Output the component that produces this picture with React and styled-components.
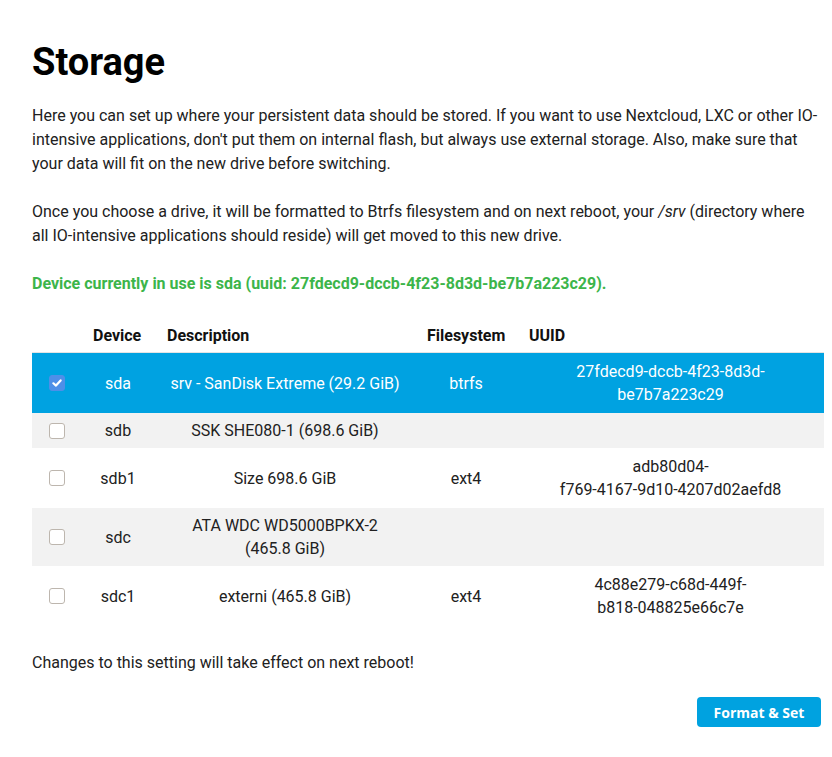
import React from 'react';
import styled, { createGlobalStyle } from 'styled-components';

const GlobalStyle = createGlobalStyle`
  body {
    margin: 0;
    background: #fff;
    font-family: Roboto, "Liberation Sans", sans-serif;
    color: #212121;
  }
`;

const Page = styled.div`
  padding: 38px 8px 30px 32px;
`;

const Title = styled.h1`
  font-size: 38px;
  line-height: 48px;
  font-weight: 700;
  margin: 0 0 18px;
  color: #000;
`;

const Text = styled.p`
  font-size: 16px;
  line-height: 24px;
  margin: 0 0 24px;
`;

const InUse = styled.p`
  font-size: 16px;
  line-height: 24px;
  font-weight: 700;
  color: #3cb54a;
  margin: 0 0 22px;
`;

const Table = styled.table`
  width: 792px;
  border-collapse: collapse;
  table-layout: fixed;
  font-size: 16px;
  line-height: 23px;
`;

const Th = styled.th`
  text-align: left;
  font-weight: 700;
  padding: 6px 12px 5px;
  border-bottom: 1px solid #e4e4e4;
  color: #111;
`;

const Row = styled.tr`
  background: ${p => (p.$selected ? '#00a2e1' : p.$odd ? '#f2f2f2' : '#fff')};
  color: ${p => (p.$selected ? '#fff' : '#212121')};
`;

const Td = styled.td`
  text-align: center;
  padding: ${p => (p.$wide ? '7px 12px' : '6px 12px')};
  padding-left: ${p => (p.$tight ? '15px' : '12px')};
  padding-right: ${p => (p.$tight ? '15px' : '12px')};
  vertical-align: middle;
`;

const Seg = styled.span`
  white-space: nowrap;
`;

const CheckCell = styled.td`
  padding: 6px 0 6px 17px;
  vertical-align: middle;
`;

const Box = styled.span`
  display: block;
  width: 16px;
  height: 16px;
  box-sizing: border-box;
  border-radius: 3px;
  border: 1px solid ${p => (p.$checked ? '#4e8fe8' : '#bdb6ae')};
  background: ${p => (p.$checked ? '#4e8fe8' : '#fff')};
  position: relative;
  svg { position: absolute; left: 2px; top: 2px; }
`;

const Note = styled.p`
  font-size: 16px;
  line-height: 24px;
  margin: 25px 0 22px;
`;

const Actions = styled.div`
  display: flex;
  justify-content: flex-end;
  padding-right: 3px;
`;

const Button = styled.button`
  background: #00a2e0;
  color: #fff;
  border: none;
  border-radius: 4px;
  font-family: "Open Sans", "Noto Sans", sans-serif;
  font-weight: 700;
  font-size: 14px;
  height: 30px;
  width: 124px;
  padding: 0;
`;

const rows = [
  { dev: 'sda', desc: 'srv - SanDisk Extreme (29.2 GiB)', fs: 'btrfs', uuid: '27fdecd9-dccb-4f23-8d3d-be7b7a223c29', selected: true },
  { dev: 'sdb', desc: 'SSK SHE080-1 (698.6 GiB)', fs: '', uuid: '' },
  { dev: 'sdb1', desc: 'Size 698.6 GiB', fs: 'ext4', uuid: 'adb80d04-f769-4167-9d10-4207d02aefd8' },
  { dev: 'sdc', desc: 'ATA WDC WD5000BPKX-2 (465.8 GiB)', fs: '', uuid: '' },
  { dev: 'sdc1', desc: 'externi (465.8 GiB)', fs: 'ext4', uuid: '4c88e279-c68d-449f-b818-048825e66c7e' },
];

// break a uuid only after a hyphen that is not followed by a digit
function Uuid({ value }) {
  const parts = value.split(/(?<=-)(?=[^0-9])/);
  return parts.map((p, i) => <Seg key={i}>{p}</Seg>);
}

function Check({ checked }) {
  return (
    <Box $checked={checked}>
      {checked && (
        <svg width="10" height="10" viewBox="0 0 10 10">
          <path d="M1.4 5.3 L4 7.6 L8.6 2.4" fill="none" stroke="#fff" strokeWidth="2.2" strokeLinecap="round" strokeLinejoin="round" />
        </svg>
      )}
    </Box>
  );
}

export default function App() {
  return (
    <Page>
      <GlobalStyle />
      <Title>Storage</Title>
      <Text>
        Here you can set up where your persistent data should be stored. If you want to use Nextcloud, LXC or other IO-intensive applications, don't put them on internal flash, but always use external storage. Also, make sure that your data will fit on the new drive before switching.
      </Text>
      <Text>
        Once you choose a drive, it will be formatted to Btrfs filesystem and on next reboot, your <i>/srv</i> (directory where all IO-intensive applications should reside) will get moved to this new drive.
      </Text>
      <InUse>Device currently in use is sda (uuid: 27fdecd9-dccb-4f23-8d3d-be7b7a223c29).</InUse>
      <Table>
        <colgroup>
          <col style={{ width: 49 }} />
          <col style={{ width: 74 }} />
          <col style={{ width: 260 }} />
          <col style={{ width: 102 }} />
          <col style={{ width: 307 }} />
        </colgroup>
        <thead>
          <tr>
            <Th />
            <Th>Device</Th>
            <Th>Description</Th>
            <Th>Filesystem</Th>
            <Th>UUID</Th>
          </tr>
        </thead>
        <tbody>
          {rows.map((r, i) => (
            <Row key={r.dev} $selected={r.selected} $odd={i % 2 === 1}>
              <CheckCell><Check checked={r.selected} /></CheckCell>
              <Td>{r.dev}</Td>
              <Td $tight>{r.desc}</Td>
              <Td>{r.fs}</Td>
              <Td $wide><Uuid value={r.uuid} /></Td>
            </Row>
          ))}
        </tbody>
      </Table>
      <Note>Changes to this setting will take effect on next reboot!</Note>
      <Actions>
        <Button>Format &amp; Set</Button>
      </Actions>
    </Page>
  );
}
